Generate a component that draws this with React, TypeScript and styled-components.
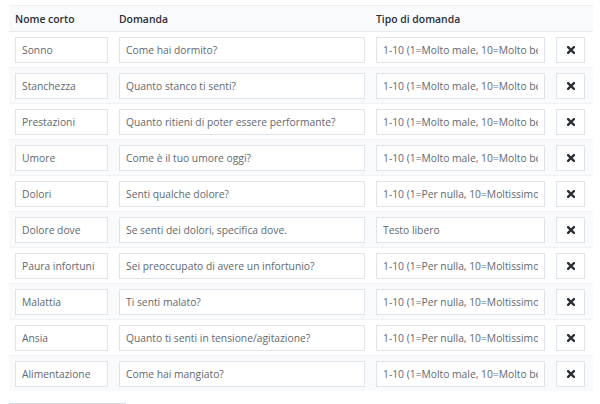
import React from "react";
import styled, { createGlobalStyle } from "styled-components";

const GlobalStyle = createGlobalStyle`
  body {
    margin: 0;
    background: #ffffff;
    font-family: "Open Sans", "Liberation Sans", sans-serif;
  }
`;

const Page = styled.div`
  padding: 5px 7px 0 9px;
  height: 404px;
  box-sizing: border-box;
  overflow: hidden;
`;

const Table = styled.table`
  width: 584px;
  border-collapse: collapse;
  table-layout: fixed;
`;

const HeadRow = styled.tr`
  background: #f9fafc;
  border-top: 1px solid #edf0f4;
  border-bottom: 1px solid #e6e9ef;
`;

const HeadCell = styled.th`
  height: 25px;
  padding: 0 6px;
  text-align: left;
  font-size: 10.4px;
  font-weight: 600;
  color: #2a2f37;
`;

const Row = styled.tr<{ $striped: boolean }>`
  background: ${(p) => (p.$striped ? "#f9fafc" : "#ffffff")};
  border-top: 1px solid #f0f2f6;
`;

const Cell = styled.td`
  height: 35px;
  padding: 0 5px 0 6px;
  vertical-align: middle;
`;

const Field = styled.input`
  display: block;
  box-sizing: border-box;
  width: 100%;
  height: 26px;
  padding: 0 6px;
  border: 1px solid #dfe3ea;
  border-radius: 0;
  background: #ffffff;
  font-family: "Open Sans", "Liberation Sans", sans-serif;
  font-size: 10.3px;
  color: #62686f;
  outline: none;
`;

const RemoveButton = styled.button`
  display: flex;
  align-items: center;
  justify-content: center;
  box-sizing: border-box;
  width: 29px;
  height: 26px;
  padding: 0;
  border: 1px solid #dfe3ea;
  background: #ffffff;
  color: #2b2f36;
`;

const AddButton = styled.button`
  margin-top: 12px;
  width: 117px;
  height: 30px;
  border: 1px solid #d7dbe2;
  background: #ffffff;
`;

// heavy "times" cross used on the remove buttons
const CrossIcon = () => (
  <svg width="8" height="8" viewBox="0 0 8 8" aria-hidden="true">
    <path d="M1.1 1.1 L6.9 6.9 M6.9 1.1 L1.1 6.9" stroke="currentColor" strokeWidth="2.3" strokeLinecap="square" />
  </svg>
);

type Question = {
  name: string;
  text: string;
  kind: string;
};

const SCALE_GOOD = "1-10 (1=Molto male, 10=Molto bene)";
const SCALE_MUCH = "1-10 (1=Per nulla, 10=Moltissimo)";

const questions: Question[] = [
  { name: "Sonno", text: "Come hai dormito?", kind: SCALE_GOOD },
  { name: "Stanchezza", text: "Quanto stanco ti senti?", kind: SCALE_GOOD },
  { name: "Prestazioni", text: "Quanto ritieni di poter essere performante?", kind: SCALE_GOOD },
  { name: "Umore", text: "Come è il tuo umore oggi?", kind: SCALE_GOOD },
  { name: "Dolori", text: "Senti qualche dolore?", kind: SCALE_MUCH },
  { name: "Dolore dove", text: "Se senti dei dolori, specifica dove.", kind: "Testo libero" },
  { name: "Paura infortuni", text: "Sei preoccupato di avere un infortunio?", kind: SCALE_MUCH },
  { name: "Malattia", text: "Ti senti malato?", kind: SCALE_MUCH },
  { name: "Ansia", text: "Quanto ti senti in tensione/agitazione?", kind: SCALE_MUCH },
  { name: "Alimentazione", text: "Come hai mangiato?", kind: SCALE_GOOD },
];

export default function App() {
  return (
    <>
      <GlobalStyle />
      <Page>
        <Table>
          <colgroup>
            <col style={{ width: 104 }} />
            <col style={{ width: 257 }} />
            <col style={{ width: 180 }} />
            <col style={{ width: 43 }} />
          </colgroup>
          <thead>
            <HeadRow>
              <HeadCell>Nome corto</HeadCell>
              <HeadCell>Domanda</HeadCell>
              <HeadCell>Tipo di domanda</HeadCell>
              <HeadCell />
            </HeadRow>
          </thead>
          <tbody>
            {questions.map((q, i) => (
              <Row key={q.name} $striped={i % 2 === 1}>
                <Cell>
                  <Field defaultValue={q.name} />
                </Cell>
                <Cell>
                  <Field defaultValue={q.text} />
                </Cell>
                <Cell>
                  <Field defaultValue={q.kind} readOnly />
                </Cell>
                <Cell>
                  <RemoveButton type="button">
                    <CrossIcon />
                  </RemoveButton>
                </Cell>
              </Row>
            ))}
          </tbody>
        </Table>
        <AddButton type="button" />
      </Page>
    </>
  );
}
